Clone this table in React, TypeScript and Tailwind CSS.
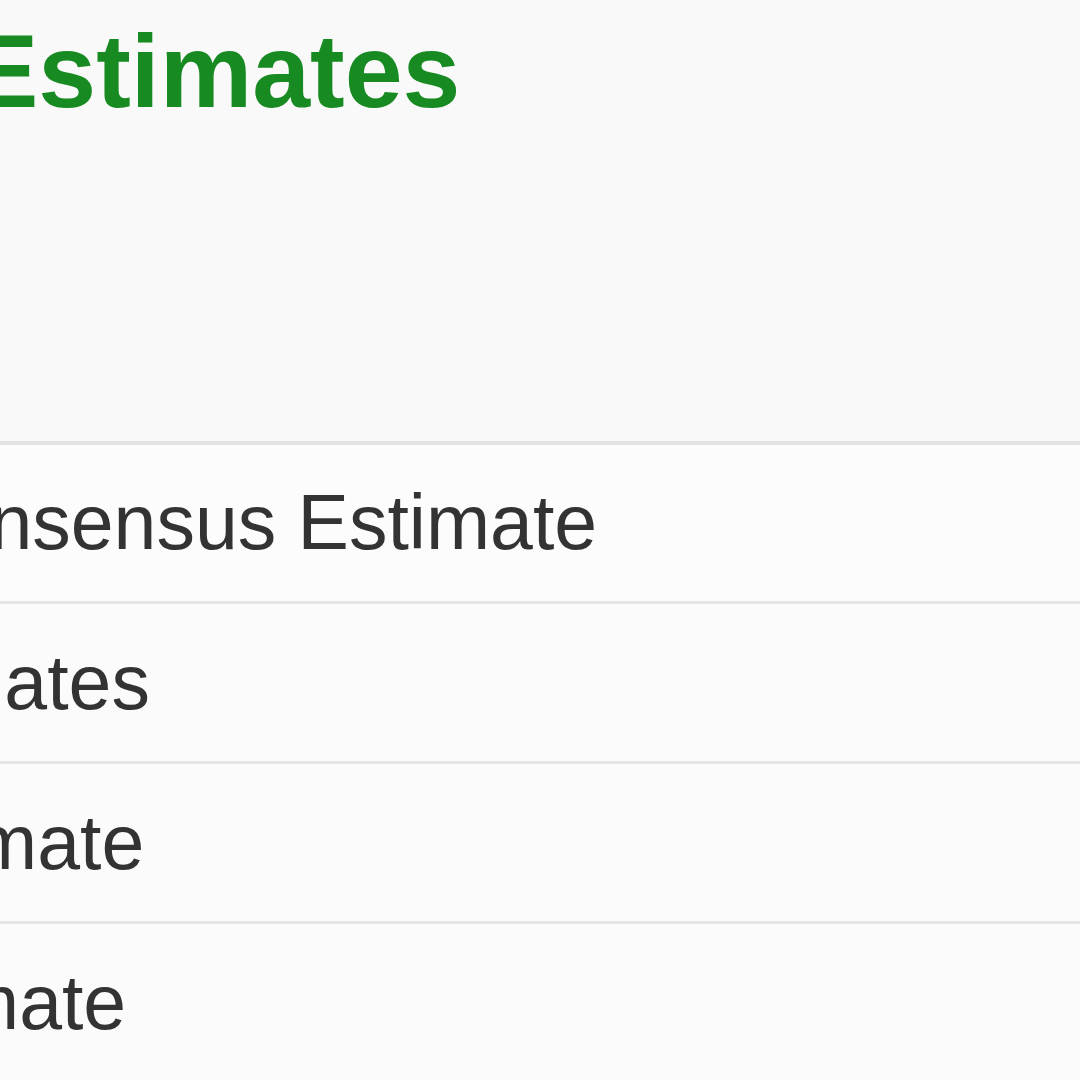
import React from 'react';

const rows = [
  { label: 'Consensus Estimate', shift: '-ml-[109px]' },
  { label: 'Number of Estimates', shift: '-ml-[569px]' },
  { label: 'High Estimate', shift: '-ml-[335px]' },
  { label: 'Low Estimate', shift: '-ml-[336px]' },
];

export default function App() {
  return (
    <div
      className="w-[1080px] h-[1080px] overflow-hidden bg-[#f9f9f9]"
      style={{ fontFamily: '"Liberation Sans", Arial, sans-serif' }}
    >
      {/* section header */}
      <div className="h-[441px] pt-[19px]">
        <h1 className="-ml-[31px] text-[104px] leading-none font-bold text-[#178a22] whitespace-nowrap">
          Estimates
        </h1>
      </div>

      {/* estimates table, first column only */}
      <div className="flex flex-col">
        {rows.map((row, i) => (
          <div
            key={row.label}
            className={
              i === 0
                ? 'h-[160px] border-t-[4px] border-[#e2e2e2] bg-[#fcfcfc] pt-[39px]'
                : 'h-[160px] border-t-[3px] border-[#e5e5e5] bg-[#fbfbfb] pt-[40px]'
            }
          >
            <div className={`${row.shift} text-[77px] leading-none text-[#333333] whitespace-nowrap`}>
              {row.label}
            </div>
          </div>
        ))}
      </div>
    </div>
  );
}
